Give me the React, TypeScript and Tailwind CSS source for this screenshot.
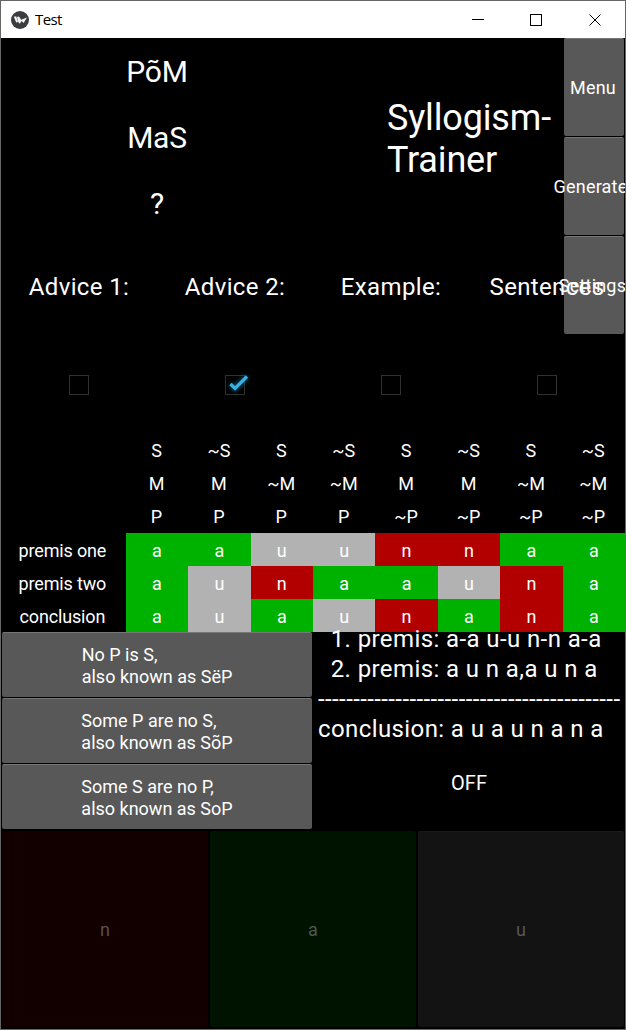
import React from "react";

const RED = "bg-[#b20000]";
const GREEN = "bg-[#00b200]";
const GREY = "bg-[#b2b2b2]";
const tone: Record<string, string> = { a: GREEN, n: RED, u: GREY };

const headers = [
  ["S", "~S", "S", "~S", "S", "~S", "S", "~S"],
  ["M", "M", "~M", "~M", "M", "M", "~M", "~M"],
  ["P", "P", "P", "P", "~P", "~P", "~P", "~P"],
];
const rows: [string, string[]][] = [
  ["premis one", ["a", "a", "u", "u", "n", "n", "a", "a"]],
  ["premis two", ["a", "u", "n", "a", "a", "u", "n", "a"]],
  ["conclusion", ["a", "u", "a", "u", "n", "a", "n", "a"]],
];
const answers = [
  ["No P is S,", "also known as SëP"],
  ["Some P are no S,", "also known as SõP"],
  ["Some S are no P,", "also known as SoP"],
];

function TitleBar() {
  return (
    <header className="flex h-[37px] shrink-0 items-center bg-white text-black">
      <svg className="ml-[10px] size-[18px]" viewBox="0 0 18 18">
        <circle cx="9" cy="9" r="9" fill="#3b3c3f" />
        <path d="M2.800 5.800L5.200 5.200L7 11L5.200 11.500zM6 6L8 5.600L10.200 8.800L16 6.500L12.600 12L10.600 10L8.800 12.800L7.200 11z" fill="#f3f3f3" />
      </svg>
      <span className="ml-[6px] grow font-['Open_Sans','Noto_Sans',sans-serif] text-[15px] tracking-[-0.6px]">Test</span>
      <svg className="mr-[23px] h-[14px] w-[130px]" viewBox="0 0 130 14" fill="none" stroke="#000" strokeWidth="1">
        <path d="M0 6.5h12M58.500 1.500h11v11h-11z" shapeRendering="crispEdges" />
        <path d="M117.500 1.500l11 11M128.500 1.500l-11 11" />
      </svg>
    </header>
  );
}

function SideButton({ label, inset }: { label: string; inset: string }) {
  return (
    <div className="h-[99px] px-px pb-px">
      <button className={`flex h-full w-full items-center justify-center rounded-[2px] border-t border-[#777] bg-[#585858] text-[18px] tracking-[0.2px] whitespace-nowrap ${inset}`}>
        {label}
      </button>
    </div>
  );
}

function Check({ on }: { on?: boolean }) {
  return (
    <div className="flex items-center justify-center">
      <svg className="size-8 overflow-visible" viewBox="0 0 32 32" fill="none">
        <rect x="6.500" y="6.500" width="19" height="19" stroke="#303030" />
        {on && (
          <g>
            <path d="M11.500 15l4.500 4.500L28 7.500" stroke="#1684b0" strokeWidth="6" opacity="0.5" className="blur-[2px]" />
            <path d="M11.500 15l4.500 4.500L28 7.500" stroke="#36b3e4" strokeWidth="3.2" />
          </g>
        )}
      </svg>
    </div>
  );
}

export default function App() {
  return (
    <div className="flex h-[1030px] w-[626px] flex-col overflow-hidden border border-[#666] bg-black font-['Roboto',sans-serif] text-white">
      <TitleBar />
      <main className="relative flex grow flex-col overflow-hidden">
        <section className="grid h-[198px] shrink-0 grid-cols-2">
          <div className="grid grid-rows-[66px_66px_66px] text-center text-[30px] leading-[68px] tracking-[-0.2px]">
            <div>PõM</div>
            <div>MaS</div>
            <div>?</div>
          </div>
          <div className="flex items-center justify-center pt-[3px] text-[36px] leading-[42px] tracking-[-0.15px]">
            <div>Syllogism-<br />Trainer</div>
          </div>
        </section>

        <section className="relative z-10 grid h-[99px] shrink-0 grid-cols-4 text-center text-[24px] leading-[103px] tracking-[0.35px]">
          <div>Advice 1:</div>
          <div>Advice 2:</div>
          <div>Example:</div>
          <div>Sentences</div>
        </section>
        <section className="grid h-[99px] shrink-0 grid-cols-4">
          <Check />
          <Check on />
          <Check />
          <Check />
        </section>

        <section className="h-[198px] shrink-0 text-center text-[18px]">
          {headers.map((r, i) => (
            <div key={i} className="grid h-[33px] grid-cols-10 leading-[33px]">
              <div className="col-span-2" />
              {r.map((c, j) => <div key={j} className="pr-px">{c}</div>)}
            </div>
          ))}
          {rows.map(([name, cells]) => (
            <div key={name} className="grid h-[33px] grid-cols-10 grid-rows-[33px] leading-[35px]">
              <div className="col-span-2 pr-[2px] tracking-[-0.15px]">{name}</div>
              {cells.map((c, j) => <div key={j} className={tone[c]}>{c}</div>)}
            </div>
          ))}
        </section>

        <section className="grid h-[198px] shrink-0 grid-cols-2">
          <div className="grid grid-rows-[66px_66px_66px]">
            {answers.map(([a, b]) => (
              <div key={b} className="px-px pb-px">
                <button className="flex h-full w-full items-center justify-center rounded-[2px] border-t border-[#777] bg-[#585858] pt-px text-left text-[18px] leading-[22px]">
                  <span>{a}<br />{b}</span>
                </button>
              </div>
            ))}
          </div>
          <div className="grid grid-rows-[99px_99px]">
            <div className="-mt-[8px] ml-[5px] text-[24px] leading-[30px] tracking-[0.4px] whitespace-pre">
              <div>{"  1. premis: a-a u-u n-n a-a"}</div>
              <div>{"  2. premis: a u n a,a u n a"}</div>
              <div>-------------------------------------------</div>
              <div>conclusion: a u a u n a n a</div>
            </div>
            <div className="flex items-center justify-center pt-1 text-[20px]">OFF</div>
          </div>
        </section>

        <section className="grid h-[198px] shrink-0 grid-cols-3 text-[18px] text-[#565656]">
          <div className="p-px"><button className="h-full w-full rounded-[2px] bg-[#120000] text-[#5a4c4c]">n</button></div>
          <div className="p-px"><button className="h-full w-full rounded-[2px] bg-[#001200] text-[#4c5a4c]">a</button></div>
          <div className="p-px"><button className="h-full w-full rounded-[2px] border-t border-[#191919] bg-[#131313]">u</button></div>
        </section>

        <nav className="absolute top-0 right-0 w-[62px]">
          <SideButton label="Menu" inset="pr-[2px]" />
          <SideButton label="Generate" inset="pr-[7px]" />
          <SideButton label="Settings" inset="pr-[3px]" />
        </nav>
      </main>
    </div>
  );
}
